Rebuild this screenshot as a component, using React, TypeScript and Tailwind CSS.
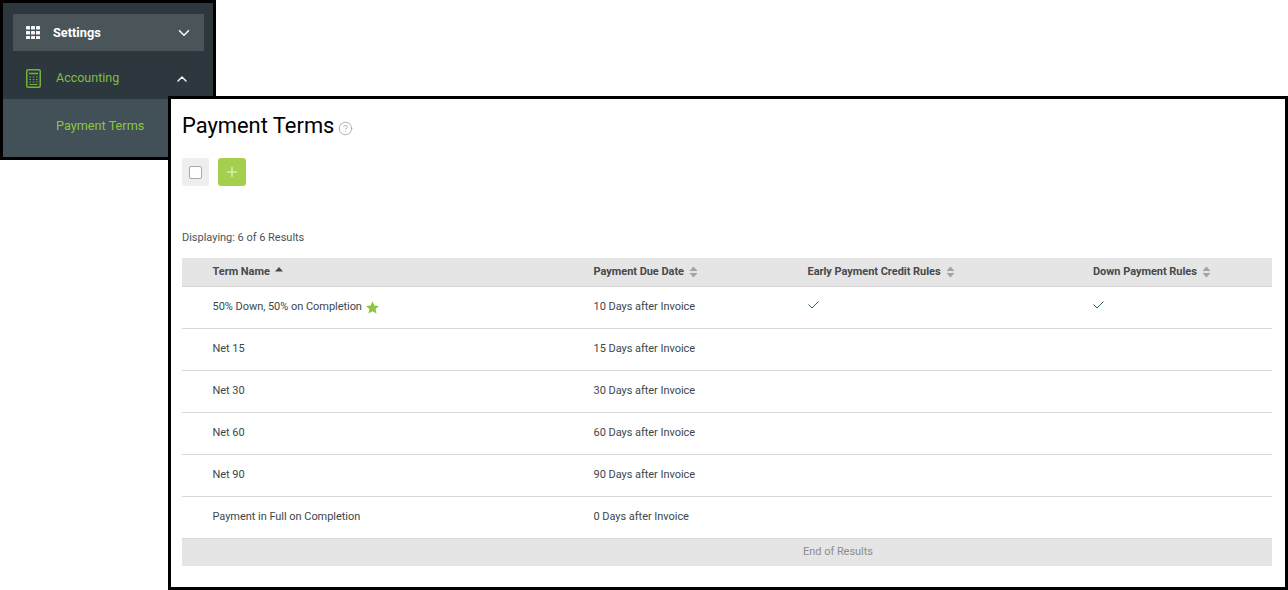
import { ChevronDown, ChevronUp, CircleHelp, Plus } from "lucide-react";

interface Term {
  name: string;
  due: string;
  isDefault?: boolean;
  early?: boolean;
  down?: boolean;
}

const terms: Term[] = [
  { name: "50% Down, 50% on Completion", due: "10 Days after Invoice", isDefault: true, early: true, down: true },
  { name: "Net 15", due: "15 Days after Invoice" },
  { name: "Net 30", due: "30 Days after Invoice" },
  { name: "Net 60", due: "60 Days after Invoice" },
  { name: "Net 90", due: "90 Days after Invoice" },
  { name: "Payment in Full on Completion", due: "0 Days after Invoice" },
];

const cols = "grid grid-cols-[411.5px_214px_285.5px_179px]";

const GridIcon = () => (
  <svg width="14" height="13" viewBox="0 0 14 13" className="shrink-0" fill="#f6f6f6">
    {[0, 5, 10].map((x) =>
      [0, 5, 10].map((y) => <rect key={`${x}-${y}`} x={x} y={y} width="4" height="3.6" rx="0.5" />)
    )}
  </svg>
);

const CalculatorIcon = () => (
  <svg width="15" height="19" viewBox="0 0 15 19" className="shrink-0" fill="none" stroke="#72b33c">
    <rect x="0.75" y="0.75" width="13.5" height="17.5" rx="1.5" strokeWidth="1.5" />
    <path d="M3 4.5h9" strokeWidth="1.5" />
    <path d="M3.5 8h1.5M6.8 8h1.5M10 8h1.5M3.5 10.5h1.5M6.8 10.5h1.5M10 10.5h1.5M3.5 13h1.5M6.8 13h1.5M10 13h1.5M3.5 15.5h8" strokeWidth="1.2" />
  </svg>
);

const SortIcon = () => (
  <svg width="9" height="12" viewBox="0 0 9 12" className="shrink-0" fill="#a3a3a3">
    <path d="M4.5 0.5 8.5 5H0.5zM0.5 7h8l-4 4.5z" />
  </svg>
);

const SortUpIcon = () => (
  <svg width="8" height="5" viewBox="0 0 8 5" className="mb-[5px] shrink-0" fill="#47494d">
    <path d="M4 0 8 4.5H0z" />
  </svg>
);

const CheckIcon = () => (
  <svg width="11" height="8" viewBox="0 0 11 8" className="-mt-[5px]" fill="none" stroke="#2f6470" strokeWidth="1">
    <path d="M0.5 3.5 4 7 10.5 0.5" />
  </svg>
);

const StarIcon = () => (
  <svg width="13" height="13" viewBox="0 0 13 13" fill="#8cc63f" className="-mt-[1px] shrink-0">
    <path d="M6.5 0.3 8.4 4.4 12.9 5 9.6 8 10.5 12.5 6.5 10.3 2.5 12.5 3.4 8 0.1 5 4.6 4.4z" />
  </svg>
);

const HeaderCell = ({ label, className = "" }: { label: string; className?: string }) => (
  <div className={`flex items-center gap-[5px] ${className}`}>
    <span>{label}</span>
    <SortIcon />
  </div>
);

const SideMenu = () => (
  <div className="absolute left-0 top-0 flex h-[160px] w-[216px] flex-col border-[3px] border-black bg-[#2d383e]">
    <div className="pl-[10px] pr-[9px] pt-[11px]">
      <div className="flex h-[37px] items-center bg-[#4a555a] pl-[13px] pr-[11px] text-[12.75px] font-bold text-white">
        <GridIcon />
        <span className="ml-[13px] flex-1">Settings</span>
        <ChevronDown size={18} strokeWidth={2.2} className="text-[#f1f2f2]" />
      </div>
    </div>
    <div className="flex h-[48px] items-center pl-[23px] pr-[23px] pt-[7px] text-[12.5px] text-[#7fbd45]">
      <CalculatorIcon />
      <span className="ml-[15px] flex-1">Accounting</span>
      <ChevronUp size={16} strokeWidth={2.2} className="text-[#f1f2f2]" />
    </div>
    <div className="flex flex-1 items-center bg-[#425058] pb-[4px] pl-[53px] text-[12.7px] text-[#8cc63f]">
      Payment Terms
    </div>
  </div>
);

export default function App() {
  return (
    <div className="relative h-[590px] w-[1288px] overflow-hidden bg-white font-['Roboto',sans-serif]">
      <SideMenu />

      <div className="absolute left-[168px] top-[96px] h-[494px] w-[1120px] border-[3px] border-black bg-white pl-[11px] pr-[13px]">
        <div className="flex h-[53px] items-center">
          <h1 className="text-[21.9px] font-normal leading-none text-black">Payment Terms</h1>
          <CircleHelp size={15} strokeWidth={1.3} className="ml-[4px] mt-[5px] text-[#a0a0a0]" />
        </div>

        <div className="mt-[6px] flex gap-[9px]">
          <div className="flex h-[28px] w-[27px] items-center justify-center rounded-[2px] bg-[#eeeeee]">
            <div className="h-[13px] w-[13px] rounded-[2px] border border-[#a9a9a9] bg-white" />
          </div>
          <div className="flex h-[28px] w-[28px] items-center justify-center rounded-[3px] bg-[#a5d04f] pb-[1px]">
            <Plus size={16} strokeWidth={1.3} className="text-[#f8fbf0]" />
          </div>
        </div>

        <div className="mt-[45px] h-[27px] text-[11px] leading-[13px] tracking-[-0.02px] text-[#4a5358]">
          Displaying: 6 of 6 Results
        </div>

        <div className="text-[11px] tracking-[-0.04px] text-[#3c474c]">
          <div className={`${cols} h-[29px] items-center border-b border-[#d6d6d6] bg-[#e5e5e5] font-bold text-[#47494d]`}>
            <div className="flex items-center gap-[5px] pl-[30.5px]">
              <span>Term Name</span>
              <SortUpIcon />
            </div>
            <HeaderCell label="Payment Due Date" />
            <HeaderCell label="Early Payment Credit Rules" />
            <HeaderCell label="Down Payment Rules" />
          </div>

          {terms.map((term) => (
            <div key={term.name} className={`${cols} h-[42px] items-center border-b border-[#d9d9d9]`}>
              <div className="flex items-center gap-[4px] pl-[30.5px]">
                <span>{term.name}</span>
                {term.isDefault && <StarIcon />}
              </div>
              <div>{term.due}</div>
              <div className="flex items-center">{term.early && <CheckIcon />}</div>
              <div className="flex items-center">{term.down && <CheckIcon />}</div>
            </div>
          ))}

          <div className="flex h-[27px] items-center justify-center bg-[#e5e5e5] pl-[222px] text-[#8c8c8c]">End of Results</div>
        </div>
      </div>
    </div>
  );
}
